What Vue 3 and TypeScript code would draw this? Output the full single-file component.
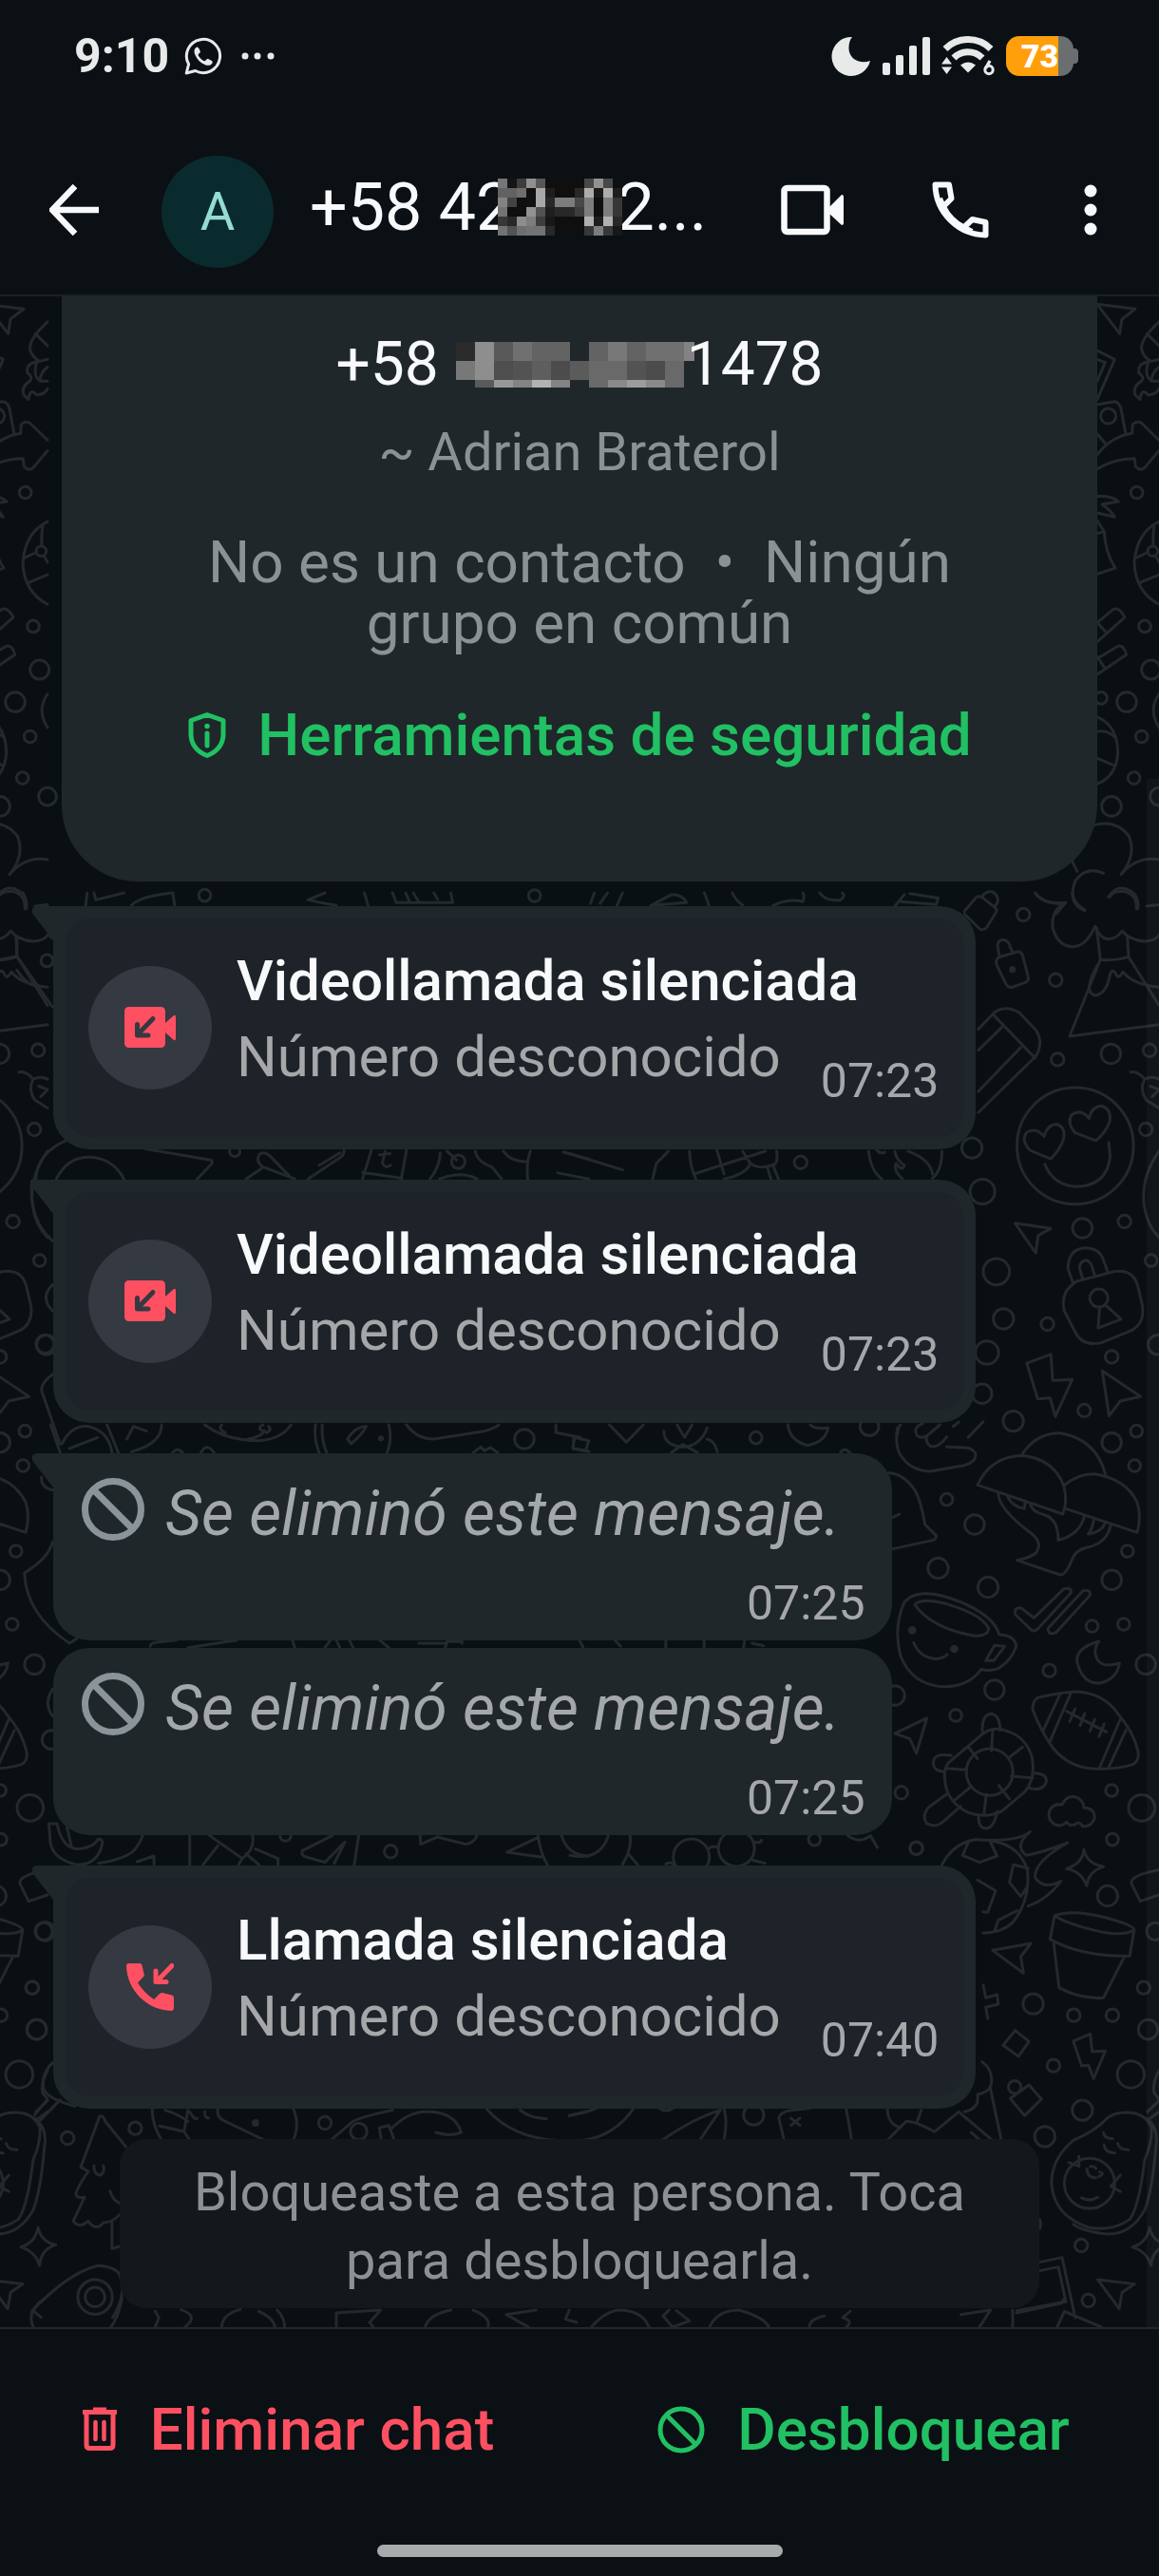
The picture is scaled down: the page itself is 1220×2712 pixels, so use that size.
<script setup lang="ts">
interface CallMessage {
  kind: 'video' | 'voice'
  title: string
  subtitle: string
  time: string
  tail: boolean
}
interface DeletedMessage {
  kind: 'deleted'
  title: string
  time: string
  tail: boolean
}
type Message = CallMessage | DeletedMessage

interface Doodle {
  transform: string
  ratio: number
  repeat: boolean
  paths: string[]
  rings: number[][]
  dots?: number[][]
}

const messages: Message[] = [
  { kind: 'video', title: 'Videollamada silenciada', subtitle: 'Número desconocido', time: '07:23', tail: true },
  { kind: 'video', title: 'Videollamada silenciada', subtitle: 'Número desconocido', time: '07:23', tail: true },
  { kind: 'deleted', title: 'Se eliminó este mensaje.', time: '07:25', tail: true },
  { kind: 'deleted', title: 'Se eliminó este mensaje.', time: '07:25', tail: false },
  { kind: 'voice', title: 'Llamada silenciada', subtitle: 'Número desconocido', time: '07:40', tail: true },
]

/* Pixelated masks: one hex pair of grey level per cell, ".." leaves the cell clear. */
const parse = (rows: string[]) =>
  rows.flatMap((row, y) =>
    row.split(' ').flatMap((cell, x) => (cell === '..' ? [] : [{ x, y, fill: `#${cell}${cell}${cell}` }])),
  )

const titleMask = parse([
  '76 15 3d 90 57 0f 0f 0f 0f 48 92 48 0f',
  '62 62 6e 11 a8 1e 0f 0f 28 ac 1a ac 1e',
  '83 43 0f 11 a8 28 7d 7d 48 7d 0f 7d 37',
  '73 0f 0f 92 52 1e 28 28 3d 7d 0f 7d 37',
  '37 28 8d 7d 3d 18 0f 0f 0f b0 1e b0 28',
  '73 52 6e 73 73 28 0f 0f 0f 37 7d 37 18',
])

const cardMask = parse([
  '2b 8e 59 70 63 63 .. 63 78 63 70 70 83',
  '78 8e 4e 53 5e 4c 5b 69 69 53 4c 69 ..',
  '.. 5b 98 83 b2 83 .. 69 89 9c 89 69 ..',
])

const doodles: Doodle[] = [
  {
    transform: 'translate(1100 312) scale(.3333 .4146)',
    ratio: 0.804,
    repeat: true,
    paths: [
      'M165 20L285 32 243 58 236 95Z',
      'M165 138L220 160 165 262M165 160L190 168 165 215M165 275L220 267Q235 270 240 285L255 350M165 350L190 373',
      'M165 402Q210 355 275 348L277 325Q290 315 305 322L360 365M165 438Q220 412 283 412L286 432Q300 445 315 435L360 392',
      'M360 65Q300 110 305 135Q312 155 335 165L360 160M322 95L360 125M330 165Q290 170 297 195Q315 205 305 215Q275 230 285 250L300 262Q305 230 325 250Q350 250 360 235M325 170Q315 200 330 210M360 180Q340 190 335 215L360 215',
      'M165 508Q210 505 232 521L180 528Q210 545 220 560L165 550M165 570L187 597 165 602M187 597Q190 650 222 690L165 705',
      'M360 572Q290 600 282 675Q285 750 360 782M285 665L325 650M345 580Q340 610 342 632M300 727L360 707M350 660L360 675',
      'M165 828L215 795Q235 788 252 815L165 877M165 828L195 855M165 920L230 888Q250 885 257 910L165 960M165 915L190 945',
      'M165 1068Q230 1090 230 1160Q225 1220 165 1238M165 1105Q195 1100 218 1118M165 1173L215 1190M360 1010Q325 1050 360 1095',
      'M145 1345Q220 1325 265 1370Q290 1420 240 1468Q290 1420 360 1430M80 1425L102 1460M185 1465Q130 1445 95 1485Q70 1540 125 1560M200 1525Q230 1490 270 1510Q300 1525 293 1555M0 1535Q30 1545 65 1540L35 1568',
    ],
    rings: [[200, 304, 24], [340, 647, 16], [290, 498, 19], [315, 838, 19], [335, 948, 30], [177, 1020, 19], [258, 1030, 31], [305, 1118, 19], [281, 1223, 19], [210, 1295, 31], [360, 1270, 28]],
  },
  {
    transform: 'translate(600 940) scale(.3954 .37)',
    ratio: 1.07,
    repeat: true,
    paths: [
      'M1050 52L1082 12Q1088 8 1096 12L1132 42Q1138 50 1134 56L1108 100Q1100 108 1090 102L1050 60M1098 10Q1105 -5 1125 -3Q1142 8 1138 28L1130 40',
      'M1238 0Q1262 35 1318 28Q1280 50 1285 100Q1300 155 1342 153Q1375 150 1398 95Q1410 130 1435 132Q1458 128 1470 108Q1490 135 1530 138Q1560 135 1568 120M1337 0Q1340 30 1370 48M1437 12Q1445 -5 1470 -5Q1510 0 1508 45M1535 38L1568 34',
      'M1402 100L1412 190L1330 408L1568 375M1412 190Q1450 195 1487 182L1484 125M1487 182L1568 320M1410 195Q1360 285 1400 292Q1430 285 1438 230Q1445 212 1455 235Q1462 245 1472 225Q1500 262 1568 268',
      'M1142 183L1190 168Q1202 166 1205 178L1220 240Q1222 250 1212 255L1176 269Q1166 270 1160 258L1136 205Q1132 190 1142 183ZM1143 180L1138 150Q1140 132 1155 134Q1170 138 1172 155L1180 172',
      'M1087 388L1130 340Q1160 318 1195 340L1240 390Q1262 425 1240 465L1087 625M1128 348L1238 470M1150 382L1087 448M1200 440L1087 565',
      'M1280 757L1225 733Q1200 705 1215 682Q1240 665 1262 693Q1270 660 1295 658Q1320 665 1314 700Q1305 730 1280 757ZM1400 705L1345 683Q1322 655 1335 632Q1360 612 1382 642Q1388 608 1415 606Q1442 615 1437 650Q1428 680 1400 705ZM1264 772Q1285 830 1345 836Q1430 835 1438 750L1434 710',
      'M1185 940L1280 955 1246 975 1240 1025ZM1417 1360L1519 1433 1465 1446 1435 1488ZM1216 1338L1280 1313 1285 1387 1337 1385 1292 1490 1278 1437 1245 1440Z',
      'M1350 1105L1450 1077Q1500 1070 1512 1120L1524 1175Q1530 1225 1495 1245L1415 1280Q1365 1292 1345 1250L1316 1190Q1305 1140 1340 1112ZM1340 1112L1326 1070Q1325 1015 1370 1010Q1410 1010 1420 1045L1432 1080M1365 1100L1356 1065Q1360 1045 1375 1045Q1386 1050 1390 1065L1398 1092M1410 1178L1406 1238 1467 1213 1425 1172',
      'M1568 735Q1525 800 1527 870Q1530 940 1568 980M1492 510Q1510 505 1530 530Q1515 560 1535 590Q1550 600 1568 612M1530 530Q1550 520 1568 530M1545 550L1568 560 1550 580',
    ],
    rings: [[1207, 62, 17], [1293, 248, 17], [1298, 474, 17], [1440, 458, 26], [1543, 448, 17], [1070, 726, 27], [1098, 850, 33], [1364, 954, 26], [1476, 935, 17], [1135, 1078, 35], [1154, 1212, 27], [1271, 1227, 17], [1110, 1308, 31], [1097, 1425, 26], [1180, 1503, 27], [1442, 1320, 17], [1369, 1473, 17], [1547, 1046, 16], [1533, 673, 17], [1345, 720, 155], [1408, 1153, 24], [1565, 1286, 26]],
    dots: [[1178, 218, 9]],
  },
  {
    transform: 'translate(600 940) scale(.3954 .37)',
    ratio: 1.07,
    repeat: false,
    paths: [
      'M0 742L140 788M262 735L230 770 220 814M318 735Q320 780 335 814M390 728L410 800M550 735Q555 770 540 775L555 814M330 800L520 735M410 814Q470 800 480 770L460 735M480 770Q510 790 545 772M525 780L535 814',
      'M795 735Q800 790 830 814M990 735Q990 790 965 812M865 735Q868 760 890 775Q885 795 868 770Q860 790 885 814M900 735Q960 760 965 800M815 728Q825 745 838 738',
      'M55 30L65 0M80 30L100 0M125 36L140 0M358 0L370 36M432 0Q440 20 460 36M540 37Q580 15 620 25Q625 10 620 0M665 0Q680 25 720 20Q735 10 725 0M865 37L890 5M880 25L975 33 980 15 905 2M215 36L310 28Q300 5 270 5Z',
    ],
    rings: [[614, 767, 17]],
  },
  {
    transform: 'translate(600 1500) scale(.3954 .3333)',
    ratio: 1.186,
    repeat: true,
    paths: [
      'M872 10Q865 50 875 85Q900 145 960 147L1050 128Q1085 115 1079 90Q1070 70 1040 72L1003 70M880 0Q872 10 872 30M940 -5Q910 10 925 35Q935 45 950 35Q945 55 960 68Q980 75 1003 38M950 35L985 0M1020 5L1035 -8M1060 40L1100 -10',
      'M1085 190Q1120 100 1205 97Q1290 110 1315 195Q1325 240 1312 282ZM1203 95Q1240 25 1305 26Q1400 45 1425 155M1315 192Q1350 155 1395 155Q1480 170 1510 245Q1522 290 1510 340L1320 265M1140 215Q1140 265 1230 345Q1260 375 1240 405Q1225 420 1190 428L1305 474Q1320 475 1335 430Q1345 395 1375 388Q1430 375 1440 315M1225 250Q1230 275 1265 285Q1300 300 1300 365Q1360 345 1370 285M1165 228Q1180 260 1210 265L1212 240M1395 295Q1392 325 1380 345Q1415 340 1425 310',
      'M850 152Q890 155 920 210Q935 245 945 315L975 350Q975 362 965 365L860 392M860 292L877 282',
      'M1186 600Q1180 578 1200 578L1235 610L1315 518Q1335 512 1334 530L1245 645Q1235 655 1228 648ZM1275 640L1365 525Q1385 518 1385 538L1295 655Q1275 668 1272 645Z',
      'M905 545Q950 515 1040 560Q1130 605 1142 662Q1185 665 1188 700Q1175 745 1140 770Q1115 780 1095 772Q1060 830 990 827Q910 820 880 730Q860 640 890 560ZM918 568Q935 545 1000 565Q1100 600 1115 645Q1110 672 1070 665Q960 640 918 568ZM1130 697L1157 700 1128 745 1107 745ZM915 688Q930 735 975 740Q1000 735 1004 725',
      'M1408 684Q1345 705 1350 750Q1365 820 1410 816Q1455 805 1463 753Q1400 775 1398 715Q1400 695 1408 684Z',
      'M1245 862Q1230 875 1232 900Q1250 960 1285 1020Q1330 1085 1400 1087Q1460 1088 1500 1072Q1517 1060 1512 1030Q1500 970 1460 915Q1420 845 1345 843Q1290 848 1245 862ZM1305 850L1260 965M1333 848L1276 1005M1465 930L1410 1083M1480 965L1435 1080M1322 905L1428 970M1345 897L1330 937M1370 912L1358 950M1397 930L1384 968M1422 945L1408 985',
      'M865 975L950 927 922 1038 905 992Z',
      'M1060 1015L1100 975Q1130 950 1170 970Q1215 990 1230 1050Q1240 1120 1210 1160L1150 1220Q1110 1245 1060 1225Q1010 1195 1000 1140Q990 1080 1015 1060ZM1125 968L1122 1030M1205 1018L1170 1050M1232 1115L1175 1110M1170 1182L1142 1140M1102 1232L1108 1167M1025 1185L1065 1145M1000 1085L1055 1090M1060 1017L1085 1055',
      'M1098 970Q1095 915 1122 913Q1145 918 1145 965M1015 1045Q965 1035 967 1072Q970 1095 995 1095M1235 1100Q1270 1100 1268 1128Q1260 1160 1220 1147M1005 1165L955 1208Q935 1235 950 1260Q975 1275 995 1252L1040 1205M1088 1237Q1085 1275 1110 1275Q1130 1270 1137 1222',
      'M1290 1262Q1268 1245 1278 1215Q1290 1195 1310 1200Q1320 1170 1345 1175Q1368 1185 1368 1210Q1395 1210 1397 1240Q1390 1270 1365 1268Q1355 1250 1345 1262Q1330 1270 1322 1255Q1308 1272 1290 1262Z',
    ],
    rings: [[1442, 56, 26], [1508, 20, 16], [1503, 129, 16], [1003, 236, 16], [1077, 315, 26], [980, 453, 27], [1113, 513, 27], [1484, 399, 16], [1442, 490, 26], [1390, 636, 16], [1474, 630, 16], [1533, 757, 26], [1276, 776, 17], [1130, 837, 26], [865, 855, 26], [1027, 918, 16], [882, 1162, 17], [1442, 1155, 16], [1522, 1210, 35], [1444, 1310, 16], [922, 1337, 17], [1117, 1097, 62]],
    dots: [[911, 649, 11], [1023, 708, 11]],
  },
  {
    transform: 'translate(600 1500) scale(.3954 .3333)',
    ratio: 1.186,
    repeat: false,
    paths: [
      'M10 40L50 50 42 82 8 75ZM105 0L150 55 195 0M250 20Q250 70 310 70Q350 60 365 10M285 0L305 40 325 0M270 88L300 62 340 88M365 45Q385 50 392 85M580 0Q585 50 632 65Q680 55 687 10Q650 15 640 0M720 88Q730 70 745 88',
      'M25 680L35 704M120 680L135 700M255 680V704M357 680V704M465 680L462 704M485 690L515 698',
      'M0 1360Q80 1380 102 1298M160 1298Q165 1340 140 1388M155 1355L180 1390M740 1298Q770 1325 800 1298L818 1335M368 1340Q380 1328 392 1335M490 1318Q510 1322 510 1312M485 1375L520 1385M255 1388Q265 1378 275 1388',
    ],
    rings: [[495, 41, 16], [797, 5, 25], [651, 1310, 16], [323, 1365, 48], [443, 1338, 48]],
  },
  {
    transform: 'translate(600 1940) scale(.3954 .3333)',
    ratio: 1.186,
    repeat: true,
    paths: [
      'M990 70Q1020 0 1080 -10M1125 -5Q1200 10 1218 90Q1225 180 1180 250Q1150 285 1100 285M1045 40L1060 0M1045 40L1090 62 1137 42 1120 0M1180 70L1220 80M1180 70L1170 125 1200 170 1217 140M1085 118L1133 152 1112 220 1100 218M1130 280L1140 245 1190 215',
      'M1080 -10Q1190 0 1225 -35Q1180 10 1215 40Q1260 30 1325 0Q1235 60 1238 110Q1260 150 1307 122Q1270 180 1220 200',
      'M1368 22Q1375 65 1420 76Q1380 90 1376 136Q1360 90 1322 82Q1365 65 1368 22Z',
      'M1290 230Q1340 210 1420 235Q1500 260 1502 275Q1470 300 1390 275Q1310 250 1290 230L1278 305Q1360 360 1490 358L1502 275M1288 320L1302 458Q1360 495 1420 490L1475 362',
      'M1125 340L1227 318 1200 360 1207 412ZM1100 450L1107 490 1137 480 1140 510 1107 520 1112 555M1185 593L1222 628 1194 675 1153 640ZM1340 627L1385 604 1390 660 1425 658 1394 745 1380 703 1362 705ZM1222 765L1255 810 1210 862 1172 808Z',
      'M1480 852Q1530 850 1548 900Q1550 950 1530 1000Q1515 1150 1490 1190Q1440 1230 1380 1215Q1290 1180 1282 1080Q1280 1000 1340 940Q1400 910 1430 870Q1450 852 1480 852ZM1535 870Q1568 900 1560 960Q1550 1100 1530 1160Q1490 1245 1420 1235Q1360 1225 1340 1205',
      'M1362 1122Q1385 1135 1405 1120M1328 1010L1355 1022 1355 990M1440 1085L1465 1050M1440 1085L1465 1102M1376 1030Q1378 1060 1400 1058M1385 1022Q1400 1022 1400 1030M1410 1040Q1425 1045 1408 1055M1420 915Q1422 935 1445 935M1422 955Q1425 980 1450 980M1458 950Q1462 970 1487 970',
      'M1543 1215Q1550 1260 1590 1270Q1550 1285 1547 1335Q1535 1290 1497 1277Q1535 1265 1543 1215ZM1405 1380L1503 1394 1470 1420 1462 1472Z',
      'M1537 850L1568 815M1545 870L1568 850M1568 720Q1550 760 1555 790L1568 810M1495 130Q1490 110 1535 95L1568 85M1495 130L1518 185 1568 165',
    ],
    rings: [[922, 18, 17], [1431, 168, 27], [1558, 280, 23], [1527, 458, 17], [1233, 509, 27], [1341, 545, 17], [1444, 545, 17], [1539, 590, 26], [1287, 704, 17], [1493, 732, 36], [1364, 845, 27], [1264, 928, 27], [1184, 772, 17], [1361, 1272, 17], [1380, 1446, 17], [1383, 1076, 67]],
  },
  {
    transform: 'translate(600 1940) scale(.3954 .3333)',
    ratio: 1.186,
    repeat: false,
    paths: [
      'M1097 692Q1130 720 1120 770Q1110 790 1085 795M1118 770L1148 938M845 940L895 880Q920 880 970 913L1035 850 1125 940M1068 915L1090 938M845 838Q845 890 880 900M935 845L925 878M1085 800Q1090 840 1050 850',
      'M0 862Q50 850 70 838M35 940Q120 925 170 838M245 940Q330 870 400 845L345 940M410 838Q420 880 410 940M238 838Q255 855 275 838M570 940L556 870Q560 850 590 845L640 838M735 838L750 940M588 870L612 893M612 870L588 893',
      'M1250 1325L1310 1310 1345 1500M1250 1352L1300 1340 1320 1450 1190 1478M1250 1190Q1256 1205 1250 1220',
    ],
    rings: [[489, 860, 27]],
  },
  {
    transform: 'translate(0 940) scale(.3954 .37)',
    ratio: 1.07,
    repeat: false,
    paths: [
      'M70 45Q70 20 62 0M228 36L232 0M250 0L255 20 330 0M350 36Q370 10 460 0M460 0L465 36M865 0L820 20Q840 25 895 36M970 0L980 36M1045 0L1055 28 1205 28 1200 0M1080 0L1090 25M1100 0L1115 25M1155 0L1165 18',
      'M95 814Q100 740 175 705M150 814Q180 750 240 752Q300 755 330 814M385 728L560 760Q570 765 560 775L525 814M655 814L695 785M690 745Q680 765 700 780L785 814M690 745Q700 735 715 745L770 805M820 814L910 750Q918 740 915 730M850 775L905 740M990 728L965 814M965 795L1070 812M1083 728L1068 814M1025 735L1018 770Q1025 785 1040 775M1010 745L1038 742',
      'M1145 814Q1170 780 1172 740M1265 735Q1270 765 1310 780L1335 814M1190 735L1215 760M1340 735Q1360 765 1400 765M1412 735Q1400 770 1405 814M1500 738L1568 758M1485 797L1568 814M1170 814Q1230 790 1270 814',
      'M85 820Q75 930 140 990M140 1115Q105 1150 140 1190M140 1370Q100 1400 115 1430L160 1568M128 118L140 130M45 130V180L140 325M0 190L45 180M45 220Q70 262 100 266',
    ],
    rings: [[545, 7, 16], [1423, 8, 16], [1220, 765, 18], [625, 735, 14], [125, 193, 16], [120, 1284, 24]],
  },
  {
    transform: 'translate(0 1500) scale(.3954 .3333)',
    ratio: 1.186,
    repeat: false,
    paths: [
      'M135 0L160 88M285 0L315 88M165 60Q190 0 235 5Q290 20 298 88M185 75L260 40M338 45L355 5 390 20M430 0Q430 60 350 85M545 0Q600 50 690 50Q750 45 775 0M590 0Q580 15 600 25M700 0Q680 15 705 20Q690 40 660 45M715 5Q725 15 710 25',
      'M840 0Q835 50 850 88M858 0Q855 50 870 88M1035 0Q1045 50 1030 88M925 45Q945 5 975 5Q965 30 935 60ZM1082 0Q1110 45 1155 45L1290 20Q1320 10 1328 0M1480 0V25L1545 40M1530 40L1525 75 1568 85',
      'M460 88Q472 70 486 88M535 88Q550 55 570 88M1260 88L1280 70 1290 82 1305 72 1325 88',
      'M400 700Q400 688 420 686L470 680M500 704L630 680M778 680L785 704M865 704L880 680M895 680L905 704M930 680L940 704M1010 680L1035 704M1115 690L1190 690 1185 704M1190 685H1230V690',
      'M140 370Q130 420 65 468Q70 600 185 690L205 675M140 835Q115 880 140 920M110 165Q110 200 140 206',
      'M130 1260L152 1260Q165 1340 210 1340Q250 1335 262 1308Q275 1310 272 1325Q260 1390 205 1390Q130 1370 133 1300ZM178 1270L190 1330M262 1385Q340 1370 360 1340Q378 1310 380 1295M505 1295V1390M555 1295L645 1370Q680 1340 672 1295M580 1330L540 1390M645 1370L635 1390M655 1355L690 1390M680 1340L740 1370V1390',
      'M885 1297L805 1345Q800 1360 815 1365L865 1382 918 1318 890 1385M955 1297L943 1390M1118 1295L1120 1325 1165 1302 1240 1325Q1265 1320 1270 1295M1430 1305L1350 1350 1440 1365M1432 1297Q1440 1360 1458 1390M1495 1297Q1510 1360 1568 1362M410 1362L365 1380M410 1362V1388',
    ],
    rings: [[1396, 45, 26], [760, 1297, 15], [1040, 1348, 17], [137, 995, 25]],
    dots: [[1014, 43, 8]],
  },
  {
    transform: 'translate(0 1940) scale(.3954 .3333)',
    ratio: 1.186,
    repeat: false,
    paths: [
      'M265 865Q275 860 280 880L335 960M265 865L215 1025L235 1038Q205 1090 202 1110Q205 1125 225 1120L195 1195Q210 1220 235 1195Q255 1230 275 1200Q300 1200 318 1175M298 1200V1282L320 1275M250 1020Q250 1050 268 1050Q280 1040 275 1020M293 1100Q300 1130 320 1140',
      'M85 1480Q180 1360 260 1336Q320 1340 322 1380Q335 1430 300 1500M90 1480L110 1500',
      'M405 840Q405 890 430 940M425 895L490 912 505 940M440 845Q470 855 500 880M490 912L500 845M505 850Q520 880 525 870M545 850Q545 870 555 870M580 838Q575 870 600 880L705 940M780 838Q800 890 780 940',
      'M880 940L930 890Q940 870 1045 845M1015 940L1010 900 1035 893 1050 940M1040 905Q1090 845 1140 850Q1210 850 1228 915Q1200 930 1160 915M1295 840Q1360 930 1480 940M1385 845Q1410 870 1455 872M1515 862L1560 850',
      'M140 695Q110 730 115 775Q125 810 200 832M125 812L92 860M160 812L108 876',
    ],
    rings: [[360, 902, 17], [180, 933, 17], [865, 885, 17], [955, 912, 22], [253, 1435, 46], [253, 1435, 26], [120, 280, 25], [98, 590, 26], [86, 458, 17]],
    dots: [[680, 885, 10]],
  },
  {
    transform: 'translate(0 2420) scale(.7781 .3333)',
    ratio: 2.33,
    repeat: false,
    paths: [
      'M60 0Q35 40 45 90M165 0Q160 60 150 90M210 40L215 60 210 90M245 35Q270 55 250 90M300 90Q300 50 325 34M350 40Q370 60 372 90M375 36Q385 60 385 90M455 45L515 36 500 75 505 90M455 45V90M575 90Q580 50 610 36M640 36Q665 60 660 90M685 50L715 90M685 50L725 36M770 36L765 65 780 75',
      'M800 90Q820 36 840 36Q870 40 878 90M905 36L897 55 910 90 933 70 915 38M960 90Q970 36 1000 36Q1035 60 1040 90M1095 90Q1095 65 1115 55M1150 40L1140 60Q1155 70 1145 90M1300 50L1340 36 1325 90M1370 36V90M1375 45L1435 15 1440 0M1430 90L1440 40 1490 90',
    ],
    rings: [],
  },
]

/* The drawing tiles sideways every 1170 units. */
const tiles = doodles.flatMap((d) =>
  d.repeat ? [d, { ...d, transform: `translate(-1170 0) ${d.transform}` }] : [d],
)
</script>

<template>
  <div class="screen">
    <header class="top">
      <div class="status">
        <div class="status-group">
          <span class="clock">9:10</span>
          <svg class="wa" viewBox="0 0 40 40" aria-hidden="true">
            <path d="M2.200 38 4.600 28.600A17.600 17.600 0 1 1 11.600 35.500Z" fill="none" stroke="#e8eaea" stroke-width="3" stroke-linejoin="round" />
            <path d="M13.500 10.500c-3 1-3.800 4.500-2 8.500 2.200 5 6 8.800 11 10.500 3.500 1 7-.3 7.300-3.300.1-1.200-4.600-3.500-5.600-3.300-1 .2-2 2.600-3 2.400-2.500-.6-6.200-4.300-6.600-6.500 0-1 2.200-1.800 2.300-3 0-1-1.700-5.300-3.400-5.300Z" fill="#e8eaea" />
          </svg>
          <svg class="more-dots" viewBox="0 0 36 8" aria-hidden="true">
            <g fill="#e8eaea"><circle cx="4" cy="4" r="3.500" /><circle cx="17" cy="4" r="3.500" /><circle cx="31" cy="4" r="3.500" /></g>
          </svg>
        </div>
        <div class="status-group right">
          <svg class="moon" viewBox="0 0 42 42" aria-hidden="true">
            <path d="M22 1A20.500 20.500 0 1 0 41 26C30 30 18 24 18.500 12 18.500 7 20 3.500 22 1Z" fill="#e8eaea" />
          </svg>
          <svg class="signal" viewBox="0 0 50 40" aria-hidden="true">
            <g fill="#e8eaea"><rect x="0" y="27" width="8" height="13" rx="2" /><rect x="14" y="19" width="8" height="21" rx="2" /><rect x="28" y="9" width="8" height="31" rx="2" /><rect x="42" y="0" width="8" height="40" rx="2" /></g>
          </svg>
          <svg class="wifi" viewBox="0 0 56 42" aria-hidden="true">
            <g fill="none" stroke="#e8eaea" stroke-width="7">
              <path d="M4 13.500A34 34 0 0 1 52 13.500" />
              <path d="M13 23A21 21 0 0 1 43 23" />
            </g>
            <path d="M20 30.500Q28 24.500 36 30.500L28 38.500ZM0 29.500 5.500 22 11 29.500ZM0 32.500H11L5.500 40Z" fill="#e8eaea" />
            <path d="M51 26 46.500 34" stroke="#e8eaea" stroke-width="3.500" />
            <circle cx="50" cy="35.500" r="4.200" fill="none" stroke="#e8eaea" stroke-width="3" />
          </svg>
          <span class="battery">73</span>
        </div>
      </div>

      <nav class="bar">
        <button class="icon back" type="button" aria-label="Atrás">
          <svg viewBox="0 0 52 54" width="52" height="54"><path d="M27 2 3 27 27 52M4 27H52" fill="none" stroke="#f7f9fa" stroke-width="6.500" /></svg>
        </button>
        <span class="avatar">A</span>
        <h1 class="title">
          <span>+58 42</span>
          <svg class="mask title-mask" viewBox="0 0 13 6" preserveAspectRatio="none" shape-rendering="crispEdges" aria-hidden="true">
            <rect v-for="(c, i) in titleMask" :key="i" :x="c.x" :y="c.y" width="1" height="1" :fill="c.fill" />
          </svg>
          <span>2...</span>
        </h1>
        <div class="actions">
          <button class="icon wide" type="button" aria-label="Videollamada">
            <svg viewBox="0 0 66 54" width="66" height="54">
              <rect x="3.500" y="4" width="45" height="46" rx="3" fill="none" stroke="#f7f9fa" stroke-width="6.500" />
              <path d="M51 24 64 11Q66 11 66 13V41Q66 43 64 43L51 31Z" fill="#f7f9fa" />
            </svg>
          </button>
          <button class="icon wide" type="button" aria-label="Llamar">
            <svg viewBox="0 0 60 60" width="60" height="60">
              <path d="M3.500 3.500H18L20.500 18 12 26.500C17 37 24 43.500 33.500 48.500L42.500 40 56.500 43V56.500C28 56 4 33 3.500 3.500ZM12 26.500 8 18M33.500 48.500 42 53" fill="none" stroke="#f7f9fa" stroke-width="6" stroke-linejoin="round" />
            </svg>
          </button>
          <button class="icon narrow" type="button" aria-label="Más opciones">
            <svg viewBox="0 0 14 54" width="14" height="54"><g fill="#f7f9fa"><circle cx="7" cy="7" r="6.500" /><circle cx="7" cy="27" r="6.500" /><circle cx="7" cy="47" r="6.500" /></g></svg>
          </button>
        </div>
      </nav>
    </header>

    <main class="chat">
      <svg class="wallpaper" viewBox="0 312 1220 2139" preserveAspectRatio="xMidYMin slice" aria-hidden="true">
        <g v-for="(d, i) in tiles" :key="i" :transform="d.transform">
          <path v-for="(p, j) in d.paths" :key="j" class="line" :d="p" />
          <ellipse v-for="(r, j) in d.rings" :key="'r' + j" class="line" :cx="r[0]" :cy="r[1]" :rx="r[2]" :ry="r[2] * d.ratio" />
          <ellipse v-for="(r, j) in d.dots ?? []" :key="'d' + j" class="dot" :cx="r[0]" :cy="r[1]" :rx="r[2]" :ry="r[2] * d.ratio" />
        </g>
      </svg>
      <div class="scroll-track"></div>

      <section class="card">
        <p class="card-number">
          <span>+58</span>
          <svg class="mask card-mask" viewBox="0 0 251 48" preserveAspectRatio="none" shape-rendering="crispEdges" aria-hidden="true">
            <rect v-for="(c, i) in cardMask" :key="i" :x="c.x * 20" :y="c.y * 20" width="20" height="20" :fill="c.fill" />
          </svg>
          <span>1478</span>
        </p>
        <p class="card-name">~ Adrian Braterol</p>
        <p class="card-info">No es un contacto &nbsp;•&nbsp; Ningún<br />grupo en común</p>
        <a class="card-link" href="#">
          <svg viewBox="0 0 42 50" width="42" height="50" aria-hidden="true">
            <path d="M21 3.500 38 9.500V24C38 35 31 43 21 46.500 11 43 4 35 4 24V9.500Z" fill="none" stroke="#21c063" stroke-width="5" stroke-linejoin="round" />
            <path d="M21 23V36" stroke="#21c063" stroke-width="5" stroke-linecap="round" /><circle cx="21" cy="15.500" r="2.800" fill="#21c063" />
          </svg>
          <span>Herramientas de seguridad</span>
        </a>
      </section>

      <ul class="messages">
        <li v-for="(m, i) in messages" :key="i" :class="['bubble', m.kind === 'deleted' ? 'deleted' : 'call', { tailed: m.tail }]">
          <svg v-if="m.tail" class="tail" viewBox="0 0 24 36" aria-hidden="true"><path d="M6 0H24V36H23L2 9Q-2 1 6 0Z" fill="#1f272a" /></svg>
          <div v-if="m.kind !== 'deleted'" class="call-box">
            <span class="call-icon">
              <svg v-if="m.kind === 'video'" viewBox="0 0 54 44" width="54" height="44" aria-hidden="true">
                <path d="M5 0H38Q43 0 43 5V17L52 9Q54 8 54 11V33Q54 36 52 35L43 27V38Q43 43 38 43H5Q0 43 0 38V5Q0 0 5 0Z" fill="#ff5062" />
                <path d="M30 12.500 14 29M13.500 18.500V30H25" fill="none" stroke="#353941" stroke-width="5" stroke-linecap="round" stroke-linejoin="round" />
              </svg>
              <svg v-else viewBox="0 0 50 50" width="50" height="50" aria-hidden="true">
                <path d="M3 0H14Q16 0 16.500 2L19 13 12 20.500C17 28 22 33 29 38L35 32Q36 31 38 31L48 33.500Q50 34 50 36V47Q50 50 47 50C22 49 1 29 0 3Q0 0 3 0Z" fill="#ff5062" />
                <path d="M48 2.500 32 19M31 8V19.500H42" fill="none" stroke="#ff5062" stroke-width="5" stroke-linecap="round" stroke-linejoin="round" />
              </svg>
            </span>
            <div class="call-text">
              <strong>{{ m.title }}</strong>
              <div class="call-detail">
                <span>{{ m.subtitle }}</span>
                <time class="time">{{ m.time }}</time>
              </div>
            </div>
          </div>
          <template v-else>
            <p class="deleted-line">
              <svg viewBox="0 0 66 66" width="66" height="66" aria-hidden="true"><g fill="none" stroke="#8b9498" stroke-width="7"><circle cx="33" cy="33" r="29.500" /><path d="M12.500 12.500 53.500 53.500" /></g></svg>
              <em>{{ m.title }}</em>
            </p>
            <time class="time">{{ m.time }}</time>
          </template>
        </li>
      </ul>

      <button class="notice" type="button">Bloqueaste a esta persona. Toca<br />para desbloquearla.</button>
    </main>

    <footer class="footer">
      <div class="footer-actions">
        <button class="action danger" type="button">
          <svg viewBox="0 0 38 48" width="38" height="48" aria-hidden="true">
            <path d="M5 8V40Q5 43.500 8.500 43.500H29.500Q33 43.500 33 40V8" fill="none" stroke="currentColor" stroke-width="5" />
            <path d="M1 5.500H37M12 3H26" fill="none" stroke="currentColor" stroke-width="5" />
            <path d="M14.500 16V34M23.500 16V34" stroke="currentColor" stroke-width="4.500" stroke-linecap="round" />
          </svg>
          <span>Eliminar chat</span>
        </button>
        <button class="action unblock" type="button">
          <svg viewBox="0 0 50 50" width="50" height="50" aria-hidden="true"><g fill="none" stroke="currentColor" stroke-width="5"><circle cx="25" cy="25" r="22" /><path d="M9.500 9.500 40.500 40.500" /></g></svg>
          <span>Desbloquear</span>
        </button>
      </div>
      <div class="home-bar"></div>
    </footer>
  </div>
</template>

<style>
body {
  margin: 0;
  background: #0b1014;
}
</style>

<style scoped>
.screen {
  display: flex;
  flex-direction: column;
  min-height: 100vh;
  background: #0b1014;
  color: #f7f9fa;
  font-family: Roboto, "Noto Sans", sans-serif;
}
button {
  padding: 0;
  border: 0;
  background: none;
  color: inherit;
  font: inherit;
}
svg {
  display: block;
  flex: none;
}
p,
h1,
ul {
  margin: 0;
  padding: 0;
}
.top {
  border-bottom: 2px solid #1a2023;
}
.status {
  display: flex;
  justify-content: space-between;
  align-items: center;
  height: 118px;
  margin-bottom: 18px;
  padding: 0 90px 0 78px;
}
.status-group {
  display: flex;
  align-items: center;
}
.clock {
  font-size: 50px;
  font-weight: 700;
  line-height: 60px;
  color: #e8eaea;
}
.wa {
  width: 40px;
  height: 40px;
  margin-left: 16px;
}
.more-dots {
  width: 36px;
  height: 8px;
  margin-left: 20px;
}
.right {
  gap: 12px;
}
.moon {
  width: 42px;
  height: 42px;
}
.signal {
  width: 50px;
  height: 40px;
}
.wifi {
  width: 56px;
  height: 42px;
}
.battery {
  position: relative;
  box-sizing: border-box;
  width: 71px;
  height: 42px;
  border-radius: 14px;
  background: linear-gradient(90deg, #ff9f0a 55px, #6a6e71 55px);
  color: #fff;
  font-size: 34px;
  font-weight: 900;
  line-height: 42px;
  text-align: center;
}
.battery::after {
  content: "";
  position: absolute;
  top: 13px;
  right: -5px;
  width: 6px;
  height: 16px;
  border-radius: 0 4px 4px 0;
  background: #6a6e71;
}
.bar {
  display: flex;
  align-items: center;
  height: 174px;
  padding: 0 56px 0 52px;
}
.icon {
  display: flex;
  align-items: center;
  justify-content: center;
  padding-bottom: 4px;
}
.avatar {
  display: flex;
  align-items: center;
  justify-content: center;
  width: 118px;
  height: 118px;
  margin-left: 66px;
  border-radius: 50%;
  background: #0a2b2d;
  color: #95dbd2;
  font-size: 56px;
}
.title {
  display: flex;
  flex: 1;
  align-items: center;
  margin-left: 38px;
  padding-bottom: 10px;
  font-size: 70px;
  font-weight: 400;
  line-height: 84px;
  white-space: pre;
}
.title-mask {
  position: relative;
  width: 131px;
  height: 60px;
  margin: 0 -6px 0 -16px;
}
.actions {
  display: flex;
  align-items: center;
  gap: 86px;
}
.wide {
  width: 70px;
}
.narrow {
  width: 32px;
}
.chat {
  position: relative;
  display: flex;
  flex: 1;
  flex-direction: column;
  padding-bottom: 20px;
  overflow: hidden;
  background: #0a0f12;
}
.wallpaper {
  position: absolute;
  inset: 0;
  width: 100%;
  height: 100%;
}
.line {
  fill: none;
  stroke: #23292c;
  stroke-width: 3;
  stroke-linejoin: round;
  stroke-linecap: round;
  vector-effect: non-scaling-stroke;
}
.dot {
  fill: #23292c;
}
.scroll-track {
  position: absolute;
  top: 508px;
  right: 0;
  bottom: 0;
  width: 13px;
  background: rgba(255, 255, 255, 0.03);
}
.card,
.messages,
.notice {
  position: relative;
}
.card {
  display: flex;
  flex-direction: column;
  align-items: center;
  margin: 0 65px;
  padding: 32px 0 122px;
  border-radius: 0 0 80px 80px;
  background: #1f272a;
  color: #8b9194;
  text-align: center;
}
.card-number {
  display: flex;
  align-items: center;
  color: #f7f9fa;
  font-size: 64px;
  line-height: 80px;
}
.card-mask {
  width: 251px;
  height: 48px;
  margin: 0 -8px 0 18px;
}
.card-name {
  margin-top: 20px;
  font-size: 56px;
  line-height: 64px;
}
.card-info {
  margin-top: 52px;
  font-size: 62px;
  line-height: 64px;
}
.card-link {
  display: flex;
  align-items: center;
  gap: 32px;
  margin-top: 54px;
  color: #21c063;
  font-size: 62px;
  font-weight: 500;
  line-height: 64px;
  text-decoration: none;
}
.messages {
  display: flex;
  flex-direction: column;
  align-items: flex-start;
  margin-top: 26px;
  padding-left: 56px;
  list-style: none;
}
.bubble {
  position: relative;
  box-sizing: border-box;
  border-radius: 38px;
  background: #1f272a;
}
.bubble + .bubble {
  margin-top: 8px;
}
.bubble + .tailed {
  margin-top: 32px;
}
.tailed {
  border-top-left-radius: 0;
}
.tail {
  position: absolute;
  top: 0;
  left: -23px;
  width: 24px;
  height: 36px;
}
.call {
  padding: 13px;
}
.call-box {
  display: flex;
  align-items: center;
  height: 230px;
  padding: 0 26px 0 24px;
  border-radius: 26px;
  background: #1d2329;
}
.call-icon {
  display: flex;
  align-items: center;
  justify-content: center;
  width: 130px;
  height: 130px;
  border-radius: 50%;
  background: #353941;
}
.call-text {
  display: flex;
  flex-direction: column;
  margin-left: 26px;
  padding-bottom: 4px;
  color: #a5a7a9;
  font-size: 60px;
  line-height: 80px;
}
.call-text strong {
  color: #f7f9fa;
  font-weight: 500;
}
.call-detail {
  display: flex;
  align-items: flex-end;
  gap: 42px;
  height: 95px;
}
.call-detail span {
  align-self: flex-start;
}
.time {
  color: #a5a7a9;
  font-size: 50px;
  line-height: 60px;
}
.deleted {
  display: flex;
  flex-direction: column;
  padding: 26px 28px 9px 30px;
}
.deleted .time {
  align-self: flex-end;
  margin-top: 26px;
}
.deleted-line {
  display: flex;
  align-items: flex-start;
  gap: 22px;
  padding-right: 26px;
  color: #a5a8aa;
  font-size: 66px;
  line-height: 76px;
}
.notice {
  align-self: center;
  margin-top: 32px;
  padding: 20px 78px 14px;
  border-radius: 28px;
  background: #12181b;
  color: #8b9194;
  font-size: 56px;
  line-height: 72px;
  text-align: center;
}
.footer {
  display: flex;
  flex-direction: column;
  align-items: center;
  padding: 70px 0 20px;
  border-top: 2px solid #22282b;
}
.footer-actions {
  display: grid;
  grid-template-columns: 1fr 1fr;
  box-sizing: border-box;
  width: 100%;
  padding-right: 8px;
}
.action {
  display: flex;
  align-items: center;
  justify-content: center;
  gap: 34px;
  font-size: 62px;
  font-weight: 500;
  line-height: 72px;
}
.danger {
  color: #ff5062;
}
.unblock {
  color: #21c063;
}
.home-bar {
  width: 35%;
  height: 13px;
  margin-top: 85px;
  border-radius: 7px;
  background: #a7abac;
}
</style>
